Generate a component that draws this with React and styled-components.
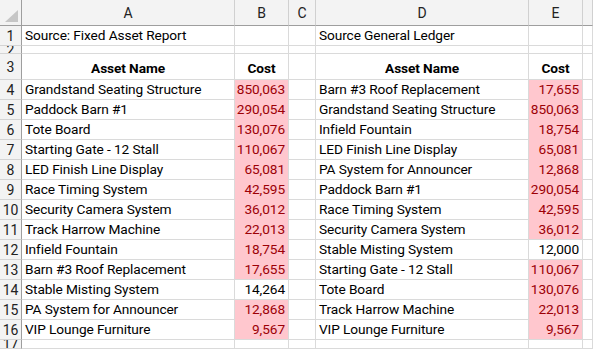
import React from 'react';
import styled, { createGlobalStyle, css } from 'styled-components';

const Global = createGlobalStyle`
  html, body { margin: 0; padding: 0; background: #ffffff; overflow: hidden; }
  * { box-sizing: border-box; }
`;

const GRID = '#dadada';
const HEAD_LINE = '#9e9e9e';

const Sheet = styled.div`
  display: grid;
  grid-template-columns: 22px 213px 54px 27px 213px 54px 1fr;
  grid-template-rows: 26px 20px 8px 26px repeat(13, 20px) 1fr;
  width: 593px;
  height: 349px;
  font-family: Roboto, "Liberation Sans", sans-serif;
  font-size: 13.7px;
  letter-spacing: -0.1px;
  color: #000;
  background: #fff;
`;

const Corner = styled.div`
  position: relative;
  background: #f3f3f3;
  border-right: 1px solid ${HEAD_LINE};
  border-bottom: 1px solid ${HEAD_LINE};
  &::after {
    content: '';
    position: absolute;
    right: 3px;
    bottom: 3px;
    width: 0;
    height: 0;
    border-left: 13px solid transparent;
    border-bottom: 12px solid #c6c6c6;
  }
`;

const ColHead = styled.div`
  display: flex;
  align-items: center;
  justify-content: center;
  background: #f3f3f3;
  border-right: 1px solid #d0d0d0;
  border-bottom: 1px solid ${HEAD_LINE};
  color: #222;
  font-size: 14px;
  padding-top: 1px;
`;

const RowHead = styled.div`
  display: flex;
  align-items: center;
  justify-content: center;
  overflow: hidden;
  background: #f3f3f3;
  border-right: 1px solid ${HEAD_LINE};
  border-bottom: 1px solid #d4d4d4;
  color: #222;
  font-size: 14px;
  line-height: 1;
`;

const Cell = styled.div`
  display: flex;
  align-items: flex-end;
  overflow: hidden;
  white-space: nowrap;
  padding: 0 3px ${p => (p.$bold ? 3 : 2)}px 3px;
  border-right: 1px solid ${GRID};
  border-bottom: 1px solid ${GRID};
  justify-content: ${p => (p.$align === 'right' ? 'flex-end' : p.$align === 'center' ? 'center' : 'flex-start')};
  font-weight: ${p => (p.$bold ? 700 : 400)};
  ${p => p.$bad && css`
    background: #ffc7ce;
    color: #9c0006;
  `}
  ${p => p.$bad && p.$joinBelow && css`
    border-bottom-color: #ffc7ce;
  `}
`;

const left = [
  ['Grandstand Seating Structure', '850,063', true],
  ['Paddock Barn #1', '290,054', true],
  ['Tote Board', '130,076', true],
  ['Starting Gate - 12 Stall', '110,067', true],
  ['LED Finish Line Display', '65,081', true],
  ['Race Timing System', '42,595', true],
  ['Security Camera System', '36,012', true],
  ['Track Harrow Machine', '22,013', true],
  ['Infield Fountain', '18,754', true],
  ['Barn #3 Roof Replacement', '17,655', true],
  ['Stable Misting System', '14,264', false],
  ['PA System for Announcer', '12,868', true],
  ['VIP Lounge Furniture', '9,567', true],
];

const right = [
  ['Barn #3 Roof Replacement', '17,655', true],
  ['Grandstand Seating Structure', '850,063', true],
  ['Infield Fountain', '18,754', true],
  ['LED Finish Line Display', '65,081', true],
  ['PA System for Announcer', '12,868', true],
  ['Paddock Barn #1', '290,054', true],
  ['Race Timing System', '42,595', true],
  ['Security Camera System', '36,012', true],
  ['Stable Misting System', '12,000', false],
  ['Starting Gate - 12 Stall', '110,067', true],
  ['Tote Board', '130,076', true],
  ['Track Harrow Machine', '22,013', true],
  ['VIP Lounge Furniture', '9,567', true],
];

export default function App() {
  const cols = ['A', 'B', 'C', 'D', 'E', ''];
  return (
    <>
      <Global />
      <Sheet>
        <Corner />
        {cols.map((c, i) => <ColHead key={'h' + i}>{c}</ColHead>)}

        <RowHead>1</RowHead>
        <Cell>Source: Fixed Asset Report</Cell>
        <Cell />
        <Cell />
        <Cell>Source General Ledger</Cell>
        <Cell />
        <Cell />

        <RowHead>2</RowHead>
        <Cell /><Cell /><Cell /><Cell /><Cell /><Cell />

        <RowHead>3</RowHead>
        <Cell $align="center" $bold>Asset Name</Cell>
        <Cell $align="center" $bold>Cost</Cell>
        <Cell />
        <Cell $align="center" $bold>Asset Name</Cell>
        <Cell $align="center" $bold>Cost</Cell>
        <Cell />

        {left.map((l, i) => {
          const r = right[i];
          const nl = left[i + 1];
          const nr = right[i + 1];
          return (
            <React.Fragment key={i}>
              <RowHead>{i + 4}</RowHead>
              <Cell>{l[0]}</Cell>
              <Cell $align="right" $bad={l[2]} $joinBelow={nl && nl[2]}>{l[1]}</Cell>
              <Cell />
              <Cell>{r[0]}</Cell>
              <Cell $align="right" $bad={r[2]} $joinBelow={nr && nr[2]}>{r[1]}</Cell>
              <Cell />
            </React.Fragment>
          );
        })}

        <RowHead>17</RowHead>
        <Cell /><Cell /><Cell /><Cell /><Cell /><Cell />
      </Sheet>
    </>
  );
}
